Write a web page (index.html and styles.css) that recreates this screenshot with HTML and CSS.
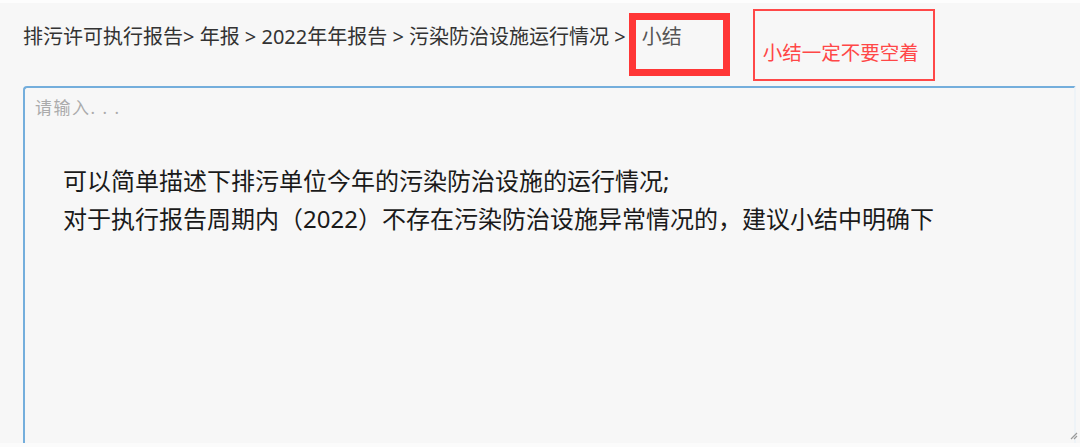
FILE: index.html
```html
<!DOCTYPE html>
<html lang="zh-CN">
<head>
<meta charset="utf-8">
<title>小结</title>
<link rel="stylesheet" href="styles.css">
</head>
<body>
<div class="page">
  <header class="header">
    <div class="crumbs">排污许可执行报告&gt; 年报 &gt; 2022年年报告 &gt; 污染防治设施运行情况 &gt;</div>
    <div class="current">小结</div>
    <div class="note-box">小结一定不要空着</div>
  </header>
  <div class="editor">
    <div class="placeholder">请输入. . .</div>
    <div class="hint">
      <p>可以简单描述下排污单位今年的污染防治设施的运行情况;</p>
      <p>对于执行报告周期内（2022）不存在污染防治设施异常情况的，建议小结中明确下</p>
    </div>
    <svg class="grip" width="8" height="8" viewBox="0 0 8 8"><path d="M7 1 L1 7 M7 4 L4 7" stroke="#9a9a9a" stroke-width="1.2" fill="none"/></svg>
  </div>
</div>
</body>
</html>
```
FILE: styles.css
```css
html, body {
  margin: 0;
  padding: 0;
  background: #fbfbfb;
}
body {
  font-family: "Noto Sans", "Noto Sans CJK SC", sans-serif;
}
.page {
  width: 1080px;
  height: 443px;
  box-sizing: border-box;
  border-top: 3px solid #fdfdfd;
  background: #f7f7f7;
  overflow: hidden;
}
.header {
  display: flex;
  align-items: flex-start;
  padding: 6px 0 0 23px;
  height: 77px;
  box-sizing: border-box;
}
.crumbs {
  margin-top: 16px;
  margin-right: 3px;
  font-size: 20px;
  line-height: 24px;
  color: #333;
  white-space: nowrap;
}
.current {
  box-sizing: border-box;
  margin-top: 4px;
  width: 101px;
  height: 63px;
  border: 7px solid #ff3636;
  padding: 5px 0 0 6px;
  font-size: 20px;
  line-height: 24px;
  color: #555;
}
.note-box {
  box-sizing: border-box;
  margin-left: 23px;
  width: 182px;
  height: 72px;
  border: 2px solid #ff4848;
  padding: 30px 0 0 8px;
  font-size: 19.5px;
  line-height: 24px;
  color: #ff4747;
  white-space: nowrap;
}
.editor {
  position: relative;
  margin: 6px 0 0 23px;
  width: 1053px;
  height: 357px;
  box-sizing: border-box;
  border: 2px solid #74aedc;
  border-right-color: #eef3f7;
  border-bottom: none;
  border-radius: 4px 2px 0 0;
  padding: 9px 10px 0 10px;
  background: #f7f7f7;
}
.placeholder {
  font-size: 17px;
  line-height: 22px;
  letter-spacing: 1.5px;
  color: #ababab;
}
.hint {
  margin: 43px 0 0 28px;
  font-size: 24px;
  line-height: 38px;
  color: #1a1a1a;
}
.hint p {
  margin: 0;
  white-space: nowrap;
}
.grip {
  position: absolute;
  right: -4px;
  bottom: 3px;
}
```
